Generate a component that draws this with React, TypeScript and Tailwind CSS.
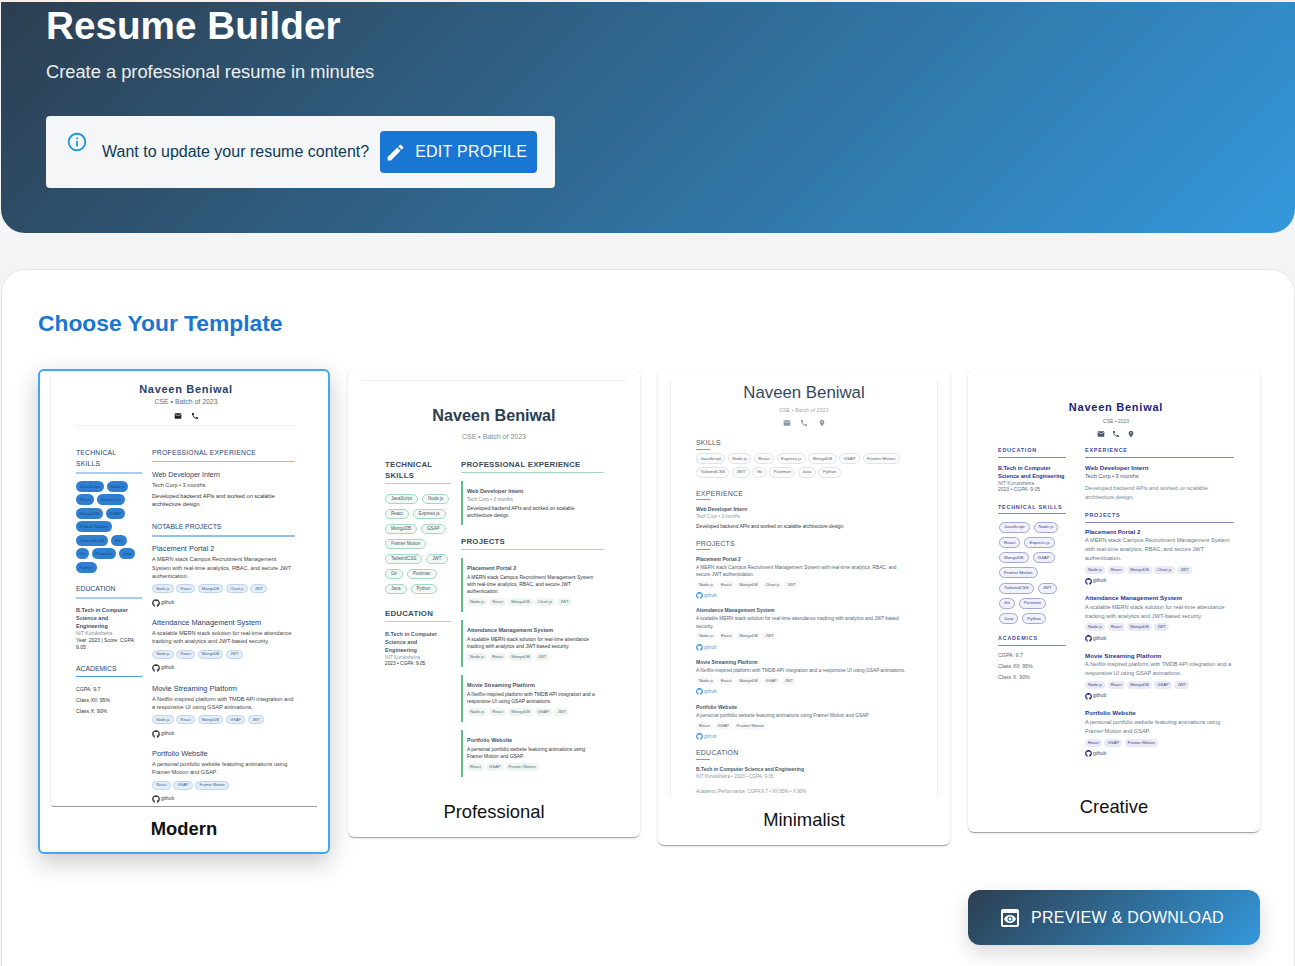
import React from "react";
import { MdEmail, MdPhone, MdLocationOn, MdInfoOutline, MdEdit, MdPreview } from "react-icons/md";
import { FaGithub } from "react-icons/fa";

const skills = ["JavaScript", "Node.js", "React", "Express.js", "MongoDB", "GSAP", "Framer Motion", "TailwindCSS", "JWT", "Git", "Postman", "Java", "Python"];
const projects = [
  { t: "Placement Portal 2", d: "A MERN stack Campus Recruitment Management System with real-time analytics, RBAC, and secure JWT authentication.", c: ["Node.js", "React", "MongoDB", "Chart.js", "JWT"] },
  { t: "Attendance Management System", d: "A scalable MERN stack solution for real-time attendance tracking with analytics and JWT-based security.", c: ["Node.js", "React", "MongoDB", "JWT"] },
  { t: "Movie Streaming Platform", d: "A Netflix-inspired platform with TMDB API integration and a responsive UI using GSAP animations.", c: ["Node.js", "React", "MongoDB", "GSAP", "JWT"] },
  { t: "Portfolio Website", d: "A personal portfolio website featuring animations using Framer Motion and GSAP.", c: ["React", "GSAP", "Framer Motion"] },
];
const desc = "Developed backend APIs and worked on scalable architecture design.";

function Modern() {
  const Sec = ({ children, cls }: { children: React.ReactNode; cls: string }) => (
    <div className={"text-[6.8px] text-[#1f3f6e] " + cls}>{children}</div>
  );
  return (
    <div className="mx-[10px] mt-[6px] w-[267px] h-[430px] border-l border-l-[#eeeeee] border-b border-b-[#999999] pl-[25px] pr-[21px] pt-[6px] rounded-bl-[4px]">
      <div className="text-center text-[11px] leading-[12px] font-bold tracking-[0.7px] text-[#1f3f6e]">Naveen Beniwal</div>
      <div className="text-center text-[6.9px] leading-[8px] mt-[3px] text-[#5a6f88]">CSE • Batch of 2023</div>
      <div className="flex justify-center gap-[9px] mt-[6px] text-[#222222]"><MdEmail size={8} /><MdPhone size={8} /></div>
      <div className="border-t border-t-[#eeeeee] mt-[5px]" />
      <div className="flex gap-[10px] mt-[20.5px]">
        <div className="w-[66px]">
          <Sec cls="leading-[11px] tracking-[0.2px]">TECHNICAL SKILLS</Sec>
          <div className="h-[2px] bg-[#a9cdf0] mt-[3px]" />
          <div className="flex flex-wrap gap-x-[3px] gap-y-[2.6px] mt-[7px]">
            {skills.map((s) => (
              <span key={s} className="h-[11px] px-[3.5px] inline-flex items-center rounded-full bg-[#2f7fd0] text-[4.4px] leading-[11px] text-[#164a85] whitespace-nowrap">{s}</span>
            ))}
          </div>
          <Sec cls="leading-[9px] mt-[11px]">EDUCATION</Sec>
          <div className="h-[2px] bg-[#a9cdf0] mt-[3.5px]" />
          <div className="text-[5.5px] leading-[8.3px] font-bold text-[#3d4d63] mt-[7px] pr-[8px]">B.Tech in Computer Science and Engineering</div>
          <div className="text-[5px] leading-[7px] text-[#7a8a9a]">NIT Kurukshetra</div>
          <div className="text-[5px] leading-[7px] text-[#333333]">Year: 2023 | Score: CGPA: 9.05</div>
          <Sec cls="leading-[9px] mt-[12.5px]">ACADEMICS</Sec>
          <div className="h-[1.5px] bg-[#4a9de8] mt-[3px]" />
          <div className="text-[5.2px] leading-[11px] text-[#333333] mt-[7px]"><div>CGPA: 9.7</div><div>Class XII: 95%</div><div>Class X: 90%</div></div>
        </div>
        <div className="w-[143px]">
          <Sec cls="leading-[11px] tracking-[0.25px]">PROFESSIONAL EXPERIENCE</Sec>
          <div className="h-[1.5px] bg-[#90c4f0] mt-[3px]" />
          <div className="text-[7px] leading-[8px] text-[#1f3f6e] mt-[9px]">Web Developer Intern</div>
          <div className="text-[5.6px] leading-[7px] text-[#444444] mt-[2.5px]">Tech Corp • 3 months</div>
          <div className="text-[5.6px] leading-[8.3px] text-[#333333] mt-[3.4px]">{desc}</div>
          <Sec cls="leading-[11px] mt-[13px]">NOTABLE PROJECTS</Sec>
          <div className="h-[1.5px] bg-[#90c4f0] mt-[3px]" />
          {projects.map((p, i) => (
            <div key={p.t} className={i === 0 ? "mt-[8.5px]" : "mt-[12.5px]"}>
              <div className="text-[7.4px] leading-[8px] text-[#1f3f6e] whitespace-nowrap">{p.t}</div>
              <div className="text-[5.6px] leading-[8.3px] text-[#444444] mt-[1.9px]">{p.d}</div>
              <div className="flex gap-[2.5px] mt-[4px]">
                {p.c.map((c) => <span key={c} className="h-[9px] px-[3.3px] inline-flex items-center rounded-full bg-[#e3eefa] border-[0.5px] border-[#bcd6ee] text-[3.9px] leading-[8px] text-[#44607e] whitespace-nowrap">{c}</span>)}
              </div>
              <div className="flex items-center gap-[1px] h-[8px] mt-[5.5px] text-[#333333] text-[4.8px] leading-[8px]"><FaGithub size={8} /><span>github</span></div>
            </div>
          ))}
        </div>
      </div>
    </div>
  );
}

function Professional() {
  const Bar = ({ cls }: { cls: string }) => <div className={"h-[1.5px] bg-[#a5d9bb] " + cls} />;
  const Sec = ({ children, cls }: { children: React.ReactNode; cls: string }) => (
    <div className={"text-[7.8px] leading-[11px] font-bold tracking-[0.25px] text-[#3a4a5c] " + cls}>{children}</div>
  );
  const Item = ({ cls, children }: { cls: string; children: React.ReactNode }) => (
    <div className={"border-l-2 border-l-[#5fbf8a] pl-[4px] pt-[6px] pb-[5.5px] " + cls}>{children}</div>
  );
  return (
    <div className="mx-[13px] mt-[11px] border-t border-t-[#f2f2f2] pl-[24px] pt-[24px]">
      <div className="text-[16.2px] leading-[20px] font-bold text-[#2c3e50] text-center pr-[24px]">Naveen Beniwal</div>
      <div className="text-[7px] leading-[9px] text-[#7f8c8d] text-center pr-[24px] mt-[6.5px]">CSE • Batch of 2023</div>
      <div className="flex gap-[10px] mt-[18px]">
        <div className="w-[66px]">
          <Sec cls="">TECHNICAL SKILLS</Sec>
          <Bar cls="mt-[2px]" />
          <div className="flex flex-wrap gap-x-[4px] gap-y-[4.5px] mt-[9.5px]">
            {skills.map((s) => <span key={s} className="h-[10.5px] px-[5px] inline-flex items-center rounded-full bg-[#f2f9f5] border-[0.5px] border-[#a5d9bb] text-[4.5px] leading-[9.5px] text-[#4a5a6a] whitespace-nowrap">{s}</span>)}
          </div>
          <Sec cls="mt-[13.5px]">EDUCATION</Sec>
          <Bar cls="mt-[2px]" />
          <div className="text-[5.5px] leading-[8.2px] font-bold text-[#4a5a6a] mt-[8px] pr-[8px]">B.Tech in Computer Science and Engineering</div>
          <div className="text-[4.8px] leading-[6.5px] text-[#8a96a2]">NIT Kurukshetra</div>
          <div className="text-[4.8px] leading-[6.5px] text-[#333333]">2023 • CGPA: 9.05</div>
        </div>
        <div className="w-[143px]">
          <Sec cls="">PROFESSIONAL EXPERIENCE</Sec>
          <Bar cls="mt-[2px]" />
          <Item cls="mt-[7.5px]">
            <div className="text-[5.5px] leading-[8px] font-bold text-[#445566]">Web Developer Intern</div>
            <div className="text-[4.8px] leading-[7px] text-[#7f8c8d] mt-[1px]">Tech Corp • 3 months</div>
            <div className="text-[4.9px] leading-[7px] text-[#333333] mt-[2.5px] pr-[20px]">{desc}</div>
          </Item>
          <Sec cls="mt-[11px]">PROJECTS</Sec>
          <Bar cls="mt-[2px]" />
          {projects.map((p, i) => (
            <Item key={p.t} cls={i === 0 ? "mt-[7.5px]" : "mt-[8px]"}>
              <div className="text-[5.5px] leading-[8px] font-bold text-[#445566]">{p.t}</div>
              <div className="text-[4.9px] leading-[7px] text-[#333333] mt-[2.5px] pr-[6px]">{p.d}</div>
              <div className="flex gap-[2px] mt-[3px]">
                {p.c.map((c) => <span key={c} className="h-[8px] px-[3px] inline-flex items-center rounded-full bg-[#eef6f2] text-[4.2px] leading-[8px] text-[#5a6a7a] whitespace-nowrap">{c}</span>)}
              </div>
            </Item>
          ))}
        </div>
      </div>
    </div>
  );
}

function Minimalist() {
  const Sec = ({ children, cls }: { children: React.ReactNode; cls: string }) => (
    <div className={cls}>
      <div className="text-[7px] leading-[9px] tracking-[0.2px] text-[#4a5a6a]">{children}</div>
    </div>
  );
  const Bar = ({ cls }: { cls: string }) => <div className={"h-px w-[14px] bg-[#5aa9e6] " + cls} />;
  return (
    <div className="mx-[12px] mt-[12px] h-[415px] overflow-hidden border-x border-x-[#eeeeee] rounded-t-[3px] pl-[25px] pr-[30px] pt-[2px]">
      <div className="text-[16.8px] leading-[20px] text-[#34495e] text-center pl-[5px]">Naveen Beniwal</div>
      <div className="text-[5px] leading-[7px] tracking-[0.2px] text-[#9aa5b0] text-center mt-[3.5px] pl-[5px]">CSE • Batch of 2023</div>
      <div className="flex justify-center gap-[9.5px] mt-[5.5px] text-[#8a97a5] pl-[5px]"><MdEmail size={8} /><MdPhone size={8} /><MdLocationOn size={8} /></div>
      <Sec cls="mt-[11px]">SKILLS</Sec>
      <Bar cls="mt-[1.5px]" />
      <div className="flex flex-wrap gap-x-[2.5px] gap-y-[2.5px] mt-[3.5px]">
        {skills.map((s) => <span key={s} className="h-[11px] px-[3.4px] inline-flex items-center rounded-full border-[0.5px] border-[#e0e4e8] bg-[#fbfbfb] text-[4.4px] leading-[10px] text-[#556677] whitespace-nowrap">{s}</span>)}
      </div>
      <Sec cls="mt-[11.5px]">EXPERIENCE</Sec>
      <Bar cls="mt-[1px]" />
      <div className="text-[5px] leading-[7px] font-bold text-[#445566] mt-[5.5px]">Web Developer Intern</div>
      <div className="text-[4.6px] leading-[7px] italic text-[#8a97a5]">Tech Corp • 3 months</div>
      <div className="text-[4.8px] leading-[7px] text-[#333333] mt-[3px]">{desc}</div>
      <Sec cls="mt-[9px]">PROJECTS</Sec>
      <Bar cls="mt-[1.5px]" />
      {projects.map((p, i) => (
        <div key={p.t} className={i === 0 ? "mt-[5.5px]" : "mt-[8.5px]"}>
          <div className="text-[5px] leading-[7px] font-bold text-[#445566]">{p.t}</div>
          <div className="text-[4.8px] leading-[7.2px] text-[#556677] mt-[1.2px]">{p.d}</div>
          <div className="flex gap-[1.5px] mt-[2.5px]">
            {p.c.map((c) => <span key={c} className="h-[8px] px-[3px] inline-flex items-center rounded-full bg-[#f8f8f8] text-[4.2px] leading-[8px] text-[#556677] whitespace-nowrap">{c}</span>)}
          </div>
          <div className="flex items-center gap-[1px] h-[7px] mt-[3.2px] text-[#3b8fd4] text-[4.6px] leading-[7px]"><FaGithub size={7} /><span className="text-[#6a9cc8]">github</span></div>
        </div>
      ))}
      <Sec cls="mt-[8.5px]">EDUCATION</Sec>
      <Bar cls="mt-[2px]" />
      <div className="text-[5px] leading-[7px] font-bold text-[#4a5a6a] mt-[5.5px]">B.Tech in Computer Science and Engineering</div>
      <div className="text-[4.7px] leading-[7px] text-[#8a97a5]">NIT Kurukshetra • 2023 • CGPA: 9.05</div>
      <div className="text-[4.7px] leading-[7px] text-[#8a97a5] mt-[8px]">Academic Performance: CGPA 9.7 • XII 95% • X 90%</div>
    </div>
  );
}

function Creative() {
  const Sec = ({ children, cls }: { children: React.ReactNode; cls: string }) => (
    <div className={"text-[5.4px] leading-[7px] font-bold tracking-[0.8px] text-[#3a4aa0] " + cls}>{children}</div>
  );
  const Bar = ({ cls }: { cls: string }) => <div className={"h-[1px] bg-[#7f87cc] " + cls} />;
  return (
    <div className="mt-[31.5px] px-[30px]">
      <div className="text-[11px] leading-[13px] font-bold tracking-[0.75px] text-[#1a237e] text-center pl-[4px]">Naveen Beniwal</div>
      <div className="text-[5px] leading-[7px] text-[#667788] text-center mt-[4px] pl-[4px]">CSE • 2023</div>
      <div className="flex justify-center gap-[7px] mt-[5px] text-[#445566] pl-[4px]"><MdEmail size={8} /><MdPhone size={8} /><MdLocationOn size={8} /></div>
      <div className="flex gap-[19px] mt-[9px]">
        <div className="w-[68px] shrink-0">
          <Sec cls="">EDUCATION</Sec>
          <Bar cls="mt-[3px]" />
          <div className="text-[5.6px] leading-[8px] font-bold text-[#283593] mt-[6px]">B.Tech in Computer Science and Engineering</div>
          <div className="text-[5px] leading-[6.7px] text-[#667788]">NIT Kurukshetra</div>
          <div className="text-[5px] leading-[6.7px] text-[#556677]">2023 • CGPA: 9.05</div>
          <Sec cls="mt-[11px]">TECHNICAL SKILLS</Sec>
          <Bar cls="mt-[2.5px]" />
          <div className="flex flex-wrap gap-x-[4px] gap-y-[4.2px] mt-[7.5px] pl-[1px]">
            {skills.map((s) => <span key={s} className="h-[11px] px-[4px] inline-flex items-center rounded-full bg-[#f0f1fa] border-[0.5px] border-[#9fa8da] text-[4.4px] leading-[10px] text-[#3f4a8a] whitespace-nowrap">{s}</span>)}
          </div>
          <Sec cls="mt-[11px]">ACADEMICS</Sec>
          <Bar cls="mt-[2.5px]" />
          <div className="text-[5.3px] leading-[11px] text-[#556677] mt-[4.5px]"><div>CGPA: 9.7</div><div>Class XII: 95%</div><div>Class X: 90%</div></div>
        </div>
        <div className="w-[149px] shrink-0">
          <Sec cls="">EXPERIENCE</Sec>
          <Bar cls="mt-[3px]" />
          <div className="text-[6.2px] leading-[8px] font-bold text-[#283593] mt-[6.5px]">Web Developer Intern</div>
          <div className="text-[5.6px] leading-[7px] text-[#445566] mt-[1.2px]">Tech Corp • 3 months</div>
          <div className="text-[5.6px] leading-[9px] text-[#778899] mt-[3.5px]">{desc}</div>
          <Sec cls="mt-[10px]">PROJECTS</Sec>
          <Bar cls="mt-[3px]" />
          {projects.map((p, i) => (
            <div key={p.t} className={i === 0 ? "mt-[5px]" : "mt-[9px]"}>
              <div className="text-[6.2px] leading-[8px] font-bold text-[#283593]">{p.t}</div>
              <div className="text-[5.6px] leading-[8.8px] text-[#667788] mt-[0.7px]">{p.d}</div>
              <div className="flex gap-[2.5px] mt-[3px]">
                {p.c.map((c) => <span key={c} className="h-[8px] px-[3px] inline-flex items-center rounded-full bg-[#e8eaf6] text-[4.2px] leading-[8px] text-[#3f4a8a] whitespace-nowrap">{c}</span>)}
              </div>
              <div className="flex items-center gap-[1px] h-[8px] mt-[3.3px] text-[#1a237e] text-[4.8px] leading-[8px]"><FaGithub size={7} /><span className="text-[#334466]">github</span></div>
            </div>
          ))}
        </div>
      </div>
    </div>
  );
}

const elev = "shadow-[0_2px_1px_-1px_rgba(0,0,0,0.2),0_1px_1px_0_rgba(0,0,0,0.14),0_1px_3px_0_rgba(0,0,0,0.12)]";

export default function App() {
  return (
    <div className="w-full h-[966px] overflow-hidden bg-[#f3f4f6] font-['Liberation_Sans',Arial,sans-serif]">
      <div className="h-[2px] bg-[#fbeee9]" />
      <div className="ml-px h-[231px] rounded-b-[24px] bg-[linear-gradient(135deg,#2c3e50,#3498db)] pl-[45px]">
        <h1 className="text-[38.7px] leading-[48px] font-bold text-white">Resume Builder</h1>
        <p className="text-[18.3px] leading-[24px] text-[#ecf0f1] mt-[10px]">Create a professional resume in minutes</p>
        <div className="mt-[32px] w-[509px] h-[72px] rounded-[4px] bg-[#f4f6f8] flex pl-[20px]">
          <MdInfoOutline size={22} className="text-[#2196d8] mt-[15px] shrink-0" />
          <span className="text-[16px] text-[#0f3a55] ml-[14px] mt-[24px] leading-[24px] whitespace-nowrap">Want to update your resume content?</span>
          <div className="ml-[11px] mt-[15px] w-[157px] h-[42px] rounded-[4px] bg-[#1976d2] flex items-center pl-[5px] text-white shrink-0">
            <MdEdit size={21} />
            <span className="ml-[9px] text-[16px] tracking-[0.25px] whitespace-nowrap">EDIT PROFILE</span>
          </div>
        </div>
      </div>
      <div className="ml-px mt-[36px] h-[701px] rounded-t-[24px] bg-white border border-[#e8e8e8] border-b-0 pl-[36px] relative">
        <h2 className="text-[22.8px] leading-[30px] font-bold text-[#1976d2] mt-[38px]">Choose Your Template</h2>
        <div className="flex items-start gap-[18px] mt-[31px] w-[1222px]">
          <div className="w-[292px] rounded-[6px] bg-white border-2 border-[#42a5f5] shadow-[0_8px_24px_rgba(0,0,0,0.22)] pb-[12px]">
            <Modern />
            <div className="text-center text-[18.4px] leading-[22px] font-bold text-[#111111] mt-[11px]">Modern</div>
          </div>
          <div className={"w-[292px] rounded-[6px] bg-white pb-[14px] " + elev}>
            <Professional />
            <div className="text-center text-[18.4px] leading-[22px] text-[#111111] mt-[24px]">Professional</div>
          </div>
          <div className={"w-[292px] rounded-[6px] bg-white pb-[14px] " + elev}>
            <Minimalist />
            <div className="text-center text-[18.4px] leading-[22px] text-[#111111] mt-[13px]">Minimalist</div>
          </div>
          <div className={"w-[292px] rounded-[6px] bg-white pb-[14px] " + elev}>
            <Creative />
            <div className="text-center text-[18.4px] leading-[22px] text-[#111111] mt-[38px]">Creative</div>
          </div>
        </div>
        <div className="absolute left-[966px] top-[620px] w-[292px] h-[55px] rounded-[12px] bg-[linear-gradient(135deg,#2c3e50,#3498db)] shadow-[0_8px_20px_rgba(0,0,0,0.15)] flex items-center pl-[30px] text-white">
          <MdPreview size={24} />
          <span className="ml-[9px] text-[16px] tracking-[0.3px] whitespace-nowrap">PREVIEW &amp; DOWNLOAD</span>
        </div>
      </div>
    </div>
  );
}
